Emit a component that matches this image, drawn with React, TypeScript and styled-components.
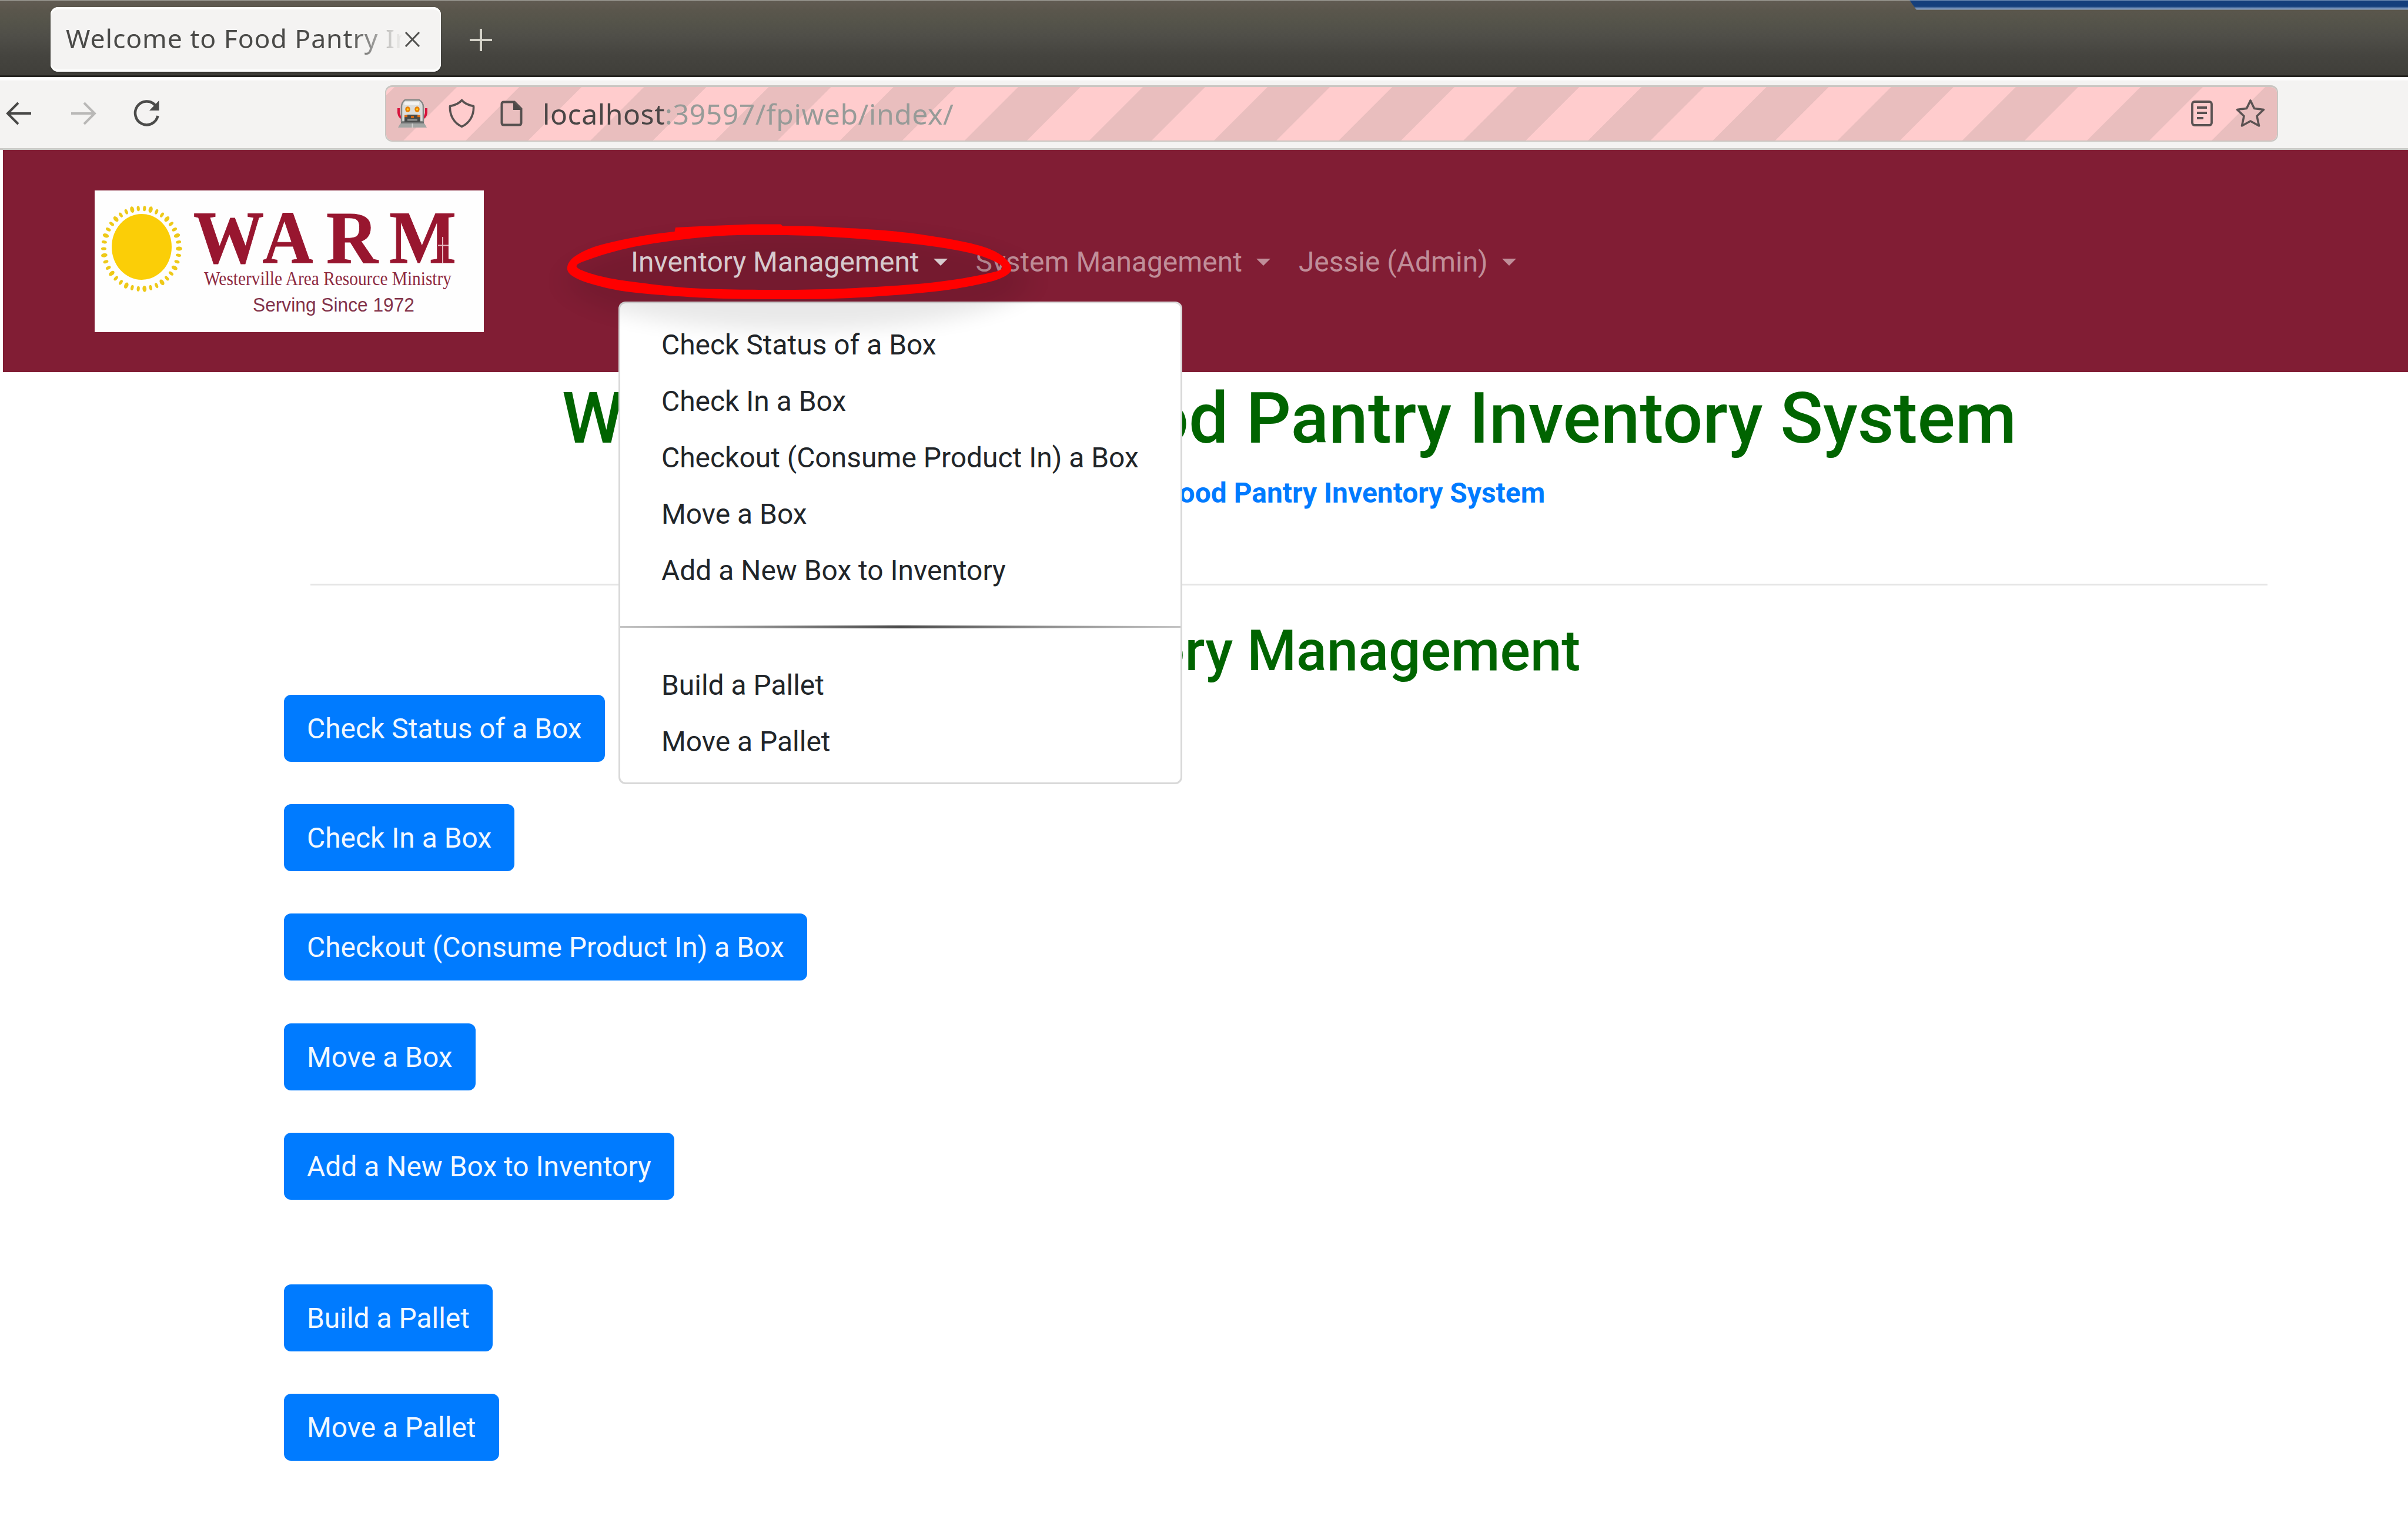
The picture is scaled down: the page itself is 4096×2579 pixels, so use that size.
import React from "react";
import styled, { createGlobalStyle, css } from "styled-components";

const GlobalStyle = createGlobalStyle`
  *, *::before, *::after { box-sizing: border-box; }
  html, body { margin: 0; padding: 0; background: #fff; }
  body { overflow: hidden; font-family: Roboto, "Liberation Sans", sans-serif; }
`;

const Window = styled.div`
  position: relative;
  display: flex;
  flex-direction: column;
  width: 4096px;
  height: 2579px;
  overflow: hidden;
  background: #fff;
  font-size: 47.95px;
  line-height: 72px;
  color: #212529;
`;

/* ---------- browser chrome ---------- */

const TitleBar = styled.header`
  display: flex;
  align-items: flex-start;
  height: 131px;
  padding: 10px 0 0 86px;
  border-top: 2px solid #8f8d86;
  border-bottom: 3px solid #282723;
  background: linear-gradient(#615b52 0, #5a564c 16px, #55544a 34px, #4f4e48 60px, #45443f 92px, #403f3a 126px);
`;

const Tab = styled.div`
  display: flex;
  align-items: center;
  width: 664px;
  height: 110px;
  padding: 0 35px 0 26px;
  border-radius: 13px;
  background: #f4f3f2;
  box-shadow: inset 0 4px 1px #fdfdfc, inset 0 -4px 1px #fdfdfc, 0 2px 2px #34332f;
`;

const TabTitle = styled.span`
  flex: none;
  width: 575px;
  overflow: hidden;
  white-space: nowrap;
  font: 44.6px/60px "Noto Sans", "Open Sans", sans-serif;
  letter-spacing: 0.9px;
  margin-top: -5px;
  color: #4a4a48;
  mask-image: linear-gradient(90deg, #000 480px, transparent 574px);
`;

const NewTab = styled.div`
  display: flex;
  margin: 35px 0 0 47px;
  height: 42px;
`;

const CornerWindow = styled.div`
  position: absolute;
  top: 0;
  right: 0;
  width: 848px;
  height: 17px;
  background: linear-gradient(#6483ac 0 1px, #153f7c 2px 11px, #6f8cb5 14px, #8fa3bd 16px, #5d5b57 17px);
  clip-path: polygon(0 0, 100% 0, 100% 100%, 12px 100%);
`;

const Toolbar = styled.div`
  display: flex;
  align-items: center;
  height: 124px;
  padding: 2px 0 0 10px;
  border-bottom: 3px solid #cbcac7;
  background: linear-gradient(#fff 0 4px, #f4f3f2 7px);
`;

const NavButtons = styled.div`
  display: flex;
  align-items: center;
  width: 645px;
`;

const NavGlyph = styled.span<{ $before?: number }>`
  display: flex;
  margin-left: ${(p) => p.$before ?? 0}px;
`;

const AddressBar = styled.div`
  display: flex;
  align-items: center;
  width: 3220px;
  height: 96px;
  padding: 0 20px 0 19px;
  border: 2px solid #cac6c2;
  border-top-width: 3px;
  border-radius: 12px;
  background: repeating-linear-gradient(
    135deg,
    #ffcccd 0 9.6px,
    #e9bebe 10.4px 84.6px,
    #ffcccd 85.4px 150px
  ) padding-box;
`;

const Glyph = styled.span<{ $gap: number }>`
  display: flex;
  margin-right: ${(p) => p.$gap}px;
`;

const Url = styled.span`
  flex: 1;
  white-space: pre;
  font: 48.2px/70px "Noto Sans", "Open Sans", sans-serif;
  letter-spacing: 0.5px;
  margin-top: -1px;
  color: #979b98;
  b { font-weight: 400; color: #4a4646; }
`;

/* ---------- page ---------- */

const SiteNav = styled.nav`
  display: flex;
  align-items: center;
  height: 378px;
  margin-left: 5px;
  padding-left: 156px;
  background: #811d34;
`;

const Logo = styled.div`
  display: flex;
  width: 662px;
  height: 241px;
  margin-right: 226px;
  background: #fefefe;
`;

const NavMenu = styled.div`
  display: flex;
  align-items: center;
  padding-top: 3px;
`;

const NavLink = styled.a<{ $active?: boolean }>`
  display: flex;
  align-items: center;
  padding: 0 24px;
  white-space: nowrap;
  color: ${(p) => (p.$active ? "#ecdfe2" : "#c08e99")};
  &::after {
    content: "";
    margin: 0 0 0 24px;
    border: 12.5px solid transparent;
    border-top-color: currentColor;
    border-bottom: 0;
  }
`;

const Dropdown = styled.div`
  position: absolute;
  left: 1052px;
  top: 513px;
  width: 959px;
  height: 821px;
  padding: 23px 0 18px;
  border: 3px solid rgba(0, 0, 0, 0.15);
  border-radius: 12px;
  background: #fff;
`;

const DropdownItem = styled.a`
  display: block;
  height: 96px;
  padding: 12px 70px;
  white-space: nowrap;
`;

const DropdownDivider = styled.hr`
  height: 5px;
  margin: 45px 0 49px;
  border: 0;
  background: linear-gradient(90deg, #c4c4c4, #8e8e8e 25%, #4a4a4a 50%, #8e8e8e 75%, #c4c4c4);
  clip-path: polygon(0 20%, 50% 0, 100% 20%, 100% 80%, 50% 100%, 0 80%);
`;

const Annotation = styled.svg`
  position: absolute;
  left: 880px;
  top: 330px;
`;

const Container = styled.main`
  display: flex;
  flex-direction: column;
  width: 3420px;
  margin-left: 483px;
  padding-top: 7px;
`;

const centered = css`
  margin: 0;
  text-align: center;
  font-weight: 500;
  color: #006400;
  white-space: nowrap;
`;

const PageTitle = styled.h1`
  ${centered}
  font-size: 120px;
  line-height: 144px;
`;

const AboutLink = styled.a`
  margin-top: 19px;
  text-align: center;
  font-weight: 700;
  color: #007bff;
`;

const Rule = styled.hr`
  width: 3329px;
  height: 3px;
  margin: 118px 0 0 45px;
  border: 0;
  background: #e5e5e5;
`;

const SectionTitle = styled.h2`
  ${centered}
  margin-top: 54px;
  font-size: 96px;
  line-height: 115px;
`;

const Actions = styled.div`
  display: flex;
  flex-direction: column;
  align-items: flex-start;
  gap: 72.2px;
  padding-top: 17px;
`;

const ActionButton = styled.a<{ $section?: boolean }>`
  height: 114px;
  padding: 22px 39px 20px;
  margin-top: ${(p) => (p.$section ? 72 : 0)}px;
  border-radius: 12px;
  background: #007bff;
  color: #f2f8ff;
  white-space: nowrap;
`;

/* ---------- drawings ---------- */

type Point = [number, number];

/* Closed Catmull-Rom curve through the given points. */
function closedCurve(points: Point[]): string {
  const n = points.length;
  const at = (i: number) => points[(i + n) % n];
  let d = `M${at(0).join(" ")}`;
  for (let i = 0; i < n; i++) {
    const [a, b, c, e] = [at(i - 1), at(i), at(i + 1), at(i + 2)];
    d += `C${b[0] + (c[0] - a[0]) / 6} ${b[1] + (c[1] - a[1]) / 6} ${c[0] - (e[0] - b[0]) / 6} ${c[1] - (e[1] - b[1]) / 6} ${c[0]} ${c[1]}`;
  }
  return d + "Z";
}

const ringOuter: Point[] = [
  [1148, 394], [1240, 386], [1331, 384.5], [1395, 385.5], [1517, 393], [1600, 404], [1667, 418], [1703, 434],
  [1720, 454], [1711, 469], [1673, 482], [1589, 496], [1445, 507], [1325, 509], [1206, 507], [1073, 497],
  [1006, 483], [973, 469], [965, 454], [978, 436], [1017, 418], [1084, 403],
];
const ringInner: Point[] = [
  [981, 454], [1006, 440], [1073, 421], [1156, 408], [1239, 400.5], [1328, 400], [1406, 402.5], [1506, 410],
  [1600, 421], [1667, 435], [1705, 455], [1667, 468], [1573, 482], [1434, 491], [1312, 493], [1184, 490.5],
  [1089, 481], [1022, 470],
];

const HighlightRing = () => (
  <Annotation width="930" height="290" viewBox="880 330 930 290">
    <defs>
      <filter id="soft" x="-20%" y="-60%" width="140%" height="220%">
        <feGaussianBlur stdDeviation="24 17" />
      </filter>
    </defs>
    <ellipse cx="1358" cy="478" rx="392" ry="84" fill="#000" opacity=".085" filter="url(#soft)" />
    <path fill="#f00" fillRule="evenodd" d={closedCurve(ringOuter) + closedCurve(ringInner)} />
    <path fill="#f00" d="M1147 396L1149 387L1200 384.5L1278 381.5H1328L1333 386L1328 396H1240Z" />
  </Annotation>
);

const rays = Array.from({ length: 38 }, (_, i) => (i * 360) / 38);

const WarmLogo = () => (
  <svg width="662" height="241" viewBox="161 324 662 241">
    <ellipse cx="241" cy="420" rx="51" ry="56" fill="#fbce07" />
    {rays.map((deg, i) => {
      const a = (deg * Math.PI) / 180;
      return (
        <ellipse
          key={deg}
          cx={240.5 + 64 * Math.cos(a)}
          cy={423 + 68.5 * Math.sin(a)}
          rx={i % 3 ? 4.6 : 5.4}
          ry={i % 3 ? 2.6 : 3.4}
          fill="#eec918"
          transform={`rotate(${deg} ${240.5 + 64 * Math.cos(a)} ${423 + 68.5 * Math.sin(a)})`}
        />
      );
    })}
    <g fill="#98162f" stroke="#98162f" strokeWidth="1" fontFamily="Liberation Serif, serif" fontWeight="700" fontSize="127">
      <text x="329" y="447" textLength="120" lengthAdjust="spacingAndGlyphs">W</text>
      <text x="446.500" y="447" textLength="86" lengthAdjust="spacingAndGlyphs">A</text>
      <text x="555" y="447" textLength="88" lengthAdjust="spacingAndGlyphs">R</text>
      <text x="662" y="447" textLength="114" lengthAdjust="spacingAndGlyphs">M</text>
    </g>
    <path d="M753 403V447M745 417.500H763" stroke="#e6b9c1" strokeWidth="2" />
    <text x="347" y="485" textLength="421" lengthAdjust="spacingAndGlyphs" fill="#8d2a41" fontFamily="Liberation Serif, serif" fontSize="33">
      Westerville Area Resource Ministry
    </text>
    <text x="430" y="529.500" textLength="275" lengthAdjust="spacingAndGlyphs" fill="#83334a" fontFamily="Liberation Sans, sans-serif" fontSize="33.500">
      Serving Since 1972
    </text>
  </svg>
);

const Arrow = ({ color, flip }: { color: string; flip?: boolean }) => (
  <svg width="44" height="40" viewBox="0 0 44 40" fill="none" stroke={color} strokeWidth="4">
    <path d={flip ? "M1 20H40M23 2L41 20L23 38" : "M43 20H4M21 2L3 20L21 38"} />
  </svg>
);

const Reload = () => (
  <svg width="46" height="48" viewBox="0 0 46 48">
    <path d="M38 10A19.500 20 0 1 0 42.500 28" fill="none" stroke="#4b4b4a" strokeWidth="4.500" />
    <path d="M44.500 2V19H28Z" fill="#4b4b4a" />
  </svg>
);

const Robot = () => (
  <svg width="51" height="50" viewBox="0 0 51 50">
    <path d="M2 16V24Q3 31 8 33M49 16V24Q48 31 43 33" fill="none" stroke="#d8123c" strokeWidth="4" />
    <path d="M13 2H37Q44 6 44 14V39H7V14Q7 6 13 2Z" fill="#dcdddb" stroke="#858886" strokeWidth="2.500" />
    <path d="M12 8H37" stroke="#f3f3f2" strokeWidth="5" />
    <ellipse cx="17.500" cy="18" rx="4.200" ry="4.800" fill="#e87e00" />
    <ellipse cx="33.500" cy="18" rx="4.200" ry="4.800" fill="#e87e00" />
    <circle cx="17.500" cy="18" r="1.800" fill="#ffd21c" />
    <circle cx="33.500" cy="18" r="1.800" fill="#ffd21c" />
    <path d="M12 39V31Q14 27 19 27H32Q37 27 39 31V39Z" fill="#454847" />
    <path d="M12 29.500H17M23 31H28M34 29.500H39" fill="none" stroke="#dc6a12" strokeWidth="3.500" />
    <path d="M17 36H34" stroke="#8f9291" strokeWidth="3" />
    <path d="M6 40.500H45" stroke="#6d7070" strokeWidth="3" />
    <path d="M5 42H46L50 49H1Z" fill="#a3a6a4" />
    <path d="M25.500 42V49" stroke="#cfd0cf" strokeWidth="2" />
  </svg>
);

const Shield = () => (
  <svg width="45" height="50" viewBox="0 0 45 50">
    <path d="M22.500 2.500C27 8 34 11 42.500 12.500C43.500 28 36 41 22.500 47.500C9 41 1.500 28 2.500 12.500C11 11 18 8 22.500 2.500Z" fill="none" stroke="#585150" strokeWidth="3.600" strokeLinejoin="round" />
  </svg>
);

const PageIcon = () => (
  <svg width="38" height="44" viewBox="0 0 38 44">
    <path d="M6 2.500H24L35.500 14V38Q35.500 41.500 32 41.500H6Q2.500 41.500 2.500 38V6Q2.500 2.500 6 2.500Z" fill="none" stroke="#575150" strokeWidth="4" />
    <path d="M22 2L36 16H22Z" fill="#4c4847" />
  </svg>
);

const ReaderIcon = () => (
  <svg width="37" height="44" viewBox="0 0 37 44" fill="none" stroke="#5a5252" strokeWidth="3.800">
    <rect x="2" y="2" width="33" height="40" rx="4" />
    <path d="M10 12H27M10 21H27M10 30H21" />
  </svg>
);

const StarIcon = () => (
  <svg width="50" height="50" viewBox="0 0 50 50">
    <path d="M25 3L31.500 16.500L47.500 18.500L36 29.500L39.500 46L25 38L10.500 46L14 29.500L2.500 18.500L18.500 16.500Z" fill="none" stroke="#5a5252" strokeWidth="3.600" strokeLinejoin="round" />
  </svg>
);

/* ---------- content ---------- */

const boxActions = [
  "Check Status of a Box",
  "Check In a Box",
  "Checkout (Consume Product In) a Box",
  "Move a Box",
  "Add a New Box to Inventory",
];
const palletActions = ["Build a Pallet", "Move a Pallet"];

export default function App() {
  return (
    <>
      <GlobalStyle />
      <Window>
        <TitleBar>
          <Tab>
            <TabTitle>Welcome to Food Pantry Inventory</TabTitle>
            <svg width="28" height="28" viewBox="0 0 28 28" stroke="#50504e" strokeWidth="3">
              <path d="M3 2L26 26M26 2L3 26" />
            </svg>
          </Tab>
          <NewTab>
            <svg width="42" height="42" viewBox="0 0 42 42" stroke="#d5d3c9" strokeWidth="4">
              <path d="M21 2V40M2 21H40" />
            </svg>
          </NewTab>
        </TitleBar>
        <CornerWindow />
        <Toolbar>
          <NavButtons>
            <NavGlyph><Arrow color="#484847" /></NavGlyph>
            <NavGlyph $before={66}><Arrow color="#b9b8b7" flip /></NavGlyph>
            <NavGlyph $before={62}><Reload /></NavGlyph>
          </NavButtons>
          <AddressBar>
            <Glyph $gap={36}><Robot /></Glyph>
            <Glyph $gap={43}><Shield /></Glyph>
            <Glyph $gap={34}><PageIcon /></Glyph>
            <Url><b>localhost</b>:39597/fpiweb/index/</Url>
            <Glyph $gap={39}><ReaderIcon /></Glyph>
            <Glyph $gap={0}><StarIcon /></Glyph>
          </AddressBar>
        </Toolbar>

        <SiteNav>
          <Logo><WarmLogo /></Logo>
          <NavMenu>
            <NavLink $active>Inventory Management</NavLink>
            <NavLink>System Management</NavLink>
            <NavLink>Jessie (Admin)</NavLink>
          </NavMenu>
        </SiteNav>

        <Container>
          <PageTitle>Welcome to the Food Pantry Inventory System</PageTitle>
          <AboutLink>About the Food Pantry Inventory System</AboutLink>
          <Rule />
          <SectionTitle>Inventory Management</SectionTitle>
          <Actions>
            {boxActions.map((label) => (
              <ActionButton key={label}>{label}</ActionButton>
            ))}
            {palletActions.map((label, i) => (
              <ActionButton key={label} $section={i === 0}>{label}</ActionButton>
            ))}
          </Actions>
        </Container>

        <Dropdown>
          {boxActions.map((label) => (
            <DropdownItem key={label}>{label}</DropdownItem>
          ))}
          <DropdownDivider />
          {palletActions.map((label) => (
            <DropdownItem key={label}>{label}</DropdownItem>
          ))}
        </Dropdown>
        <HighlightRing />
      </Window>
    </>
  );
}
